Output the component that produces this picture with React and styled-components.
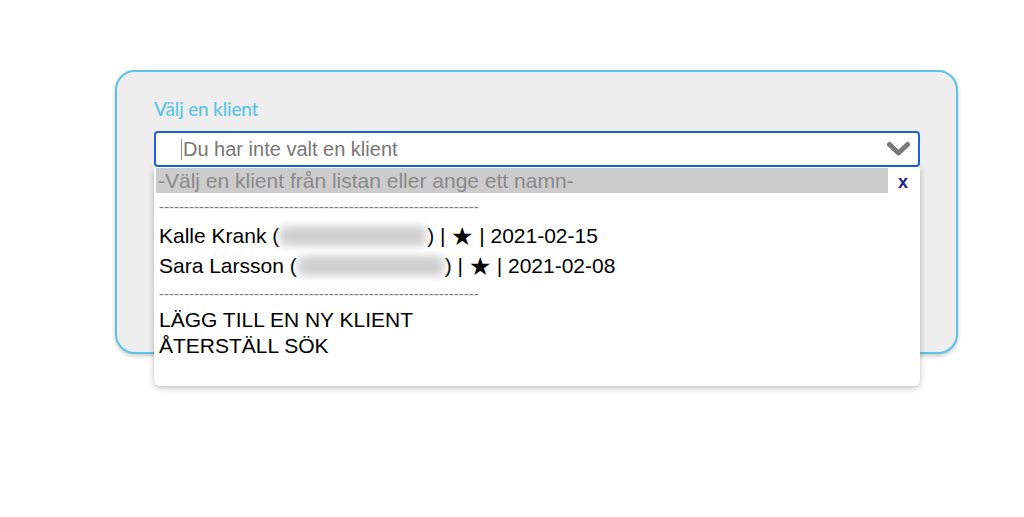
import React from "react";
import styled, { createGlobalStyle } from "styled-components";

const Global = createGlobalStyle`
  html, body { margin: 0; padding: 0; background: #ffffff; }
  body { font-family: "Liberation Sans", Arial, sans-serif; }
`;

const Page = styled.div`
  width: 1024px;
  height: 517px;
  padding: 70px 0 0 115px;
  box-sizing: border-box;
`;

const Card = styled.div`
  width: 843px;
  height: 284px;
  box-sizing: border-box;
  border: 2px solid #5cc3e7;
  border-radius: 20px;
  background: #eeeeee;
  box-shadow: 0 2px 4px rgba(0, 0, 0, 0.22);
  padding: 26px 37px 0 37px;
  display: flex;
  flex-direction: column;
  gap: 11px;
`;

const Label = styled.div`
  font-family: Lato, "Open Sans", sans-serif;
  font-size: 19px;
  font-weight: 500;
  line-height: 22px;
  color: #5cc4e8;
  letter-spacing: -0.2px;
`;

const SelectWrap = styled.div`
  position: relative;
  width: 766px;
`;

const Input = styled.div`
  height: 36px;
  box-sizing: border-box;
  border: 2px solid #1c63d4;
  border-radius: 4px;
  background: #ffffff;
  display: flex;
  align-items: center;
  padding: 0 7px 0 25px;
`;

const Placeholder = styled.span`
  flex: 1;
  font-size: 20px;
  color: #777777;
  display: flex;
  align-items: center;
  &::before {
    content: "";
    width: 1px;
    height: 21px;
    background: #8a8a8a;
    margin-right: 1px;
  }
`;

const Chevron = styled.svg`
  width: 25px;
  height: 16px;
  display: block;
`;

const Menu = styled.div`
  position: absolute;
  top: 36px;
  left: 0;
  width: 766px;
  height: 219px;
  box-sizing: border-box;
  background: #ffffff;
  border-radius: 0 0 6px 6px;
  box-shadow: 0 2px 6px rgba(0, 0, 0, 0.25);
  padding: 1px 0 0 2px;
  display: flex;
  align-items: flex-start;
`;

const List = styled.div`
  width: 732px;
  display: flex;
  flex-direction: column;
`;

const Item = styled.div`
  height: ${(p) => p.h}px;
  line-height: ${(p) => p.h}px;
  font-size: ${(p) => (p.dash ? 15 : 21)}px;
  color: ${(p) => (p.muted ? "#8a8a8a" : p.dash ? "#7d7d7d" : "#000000")};
  background: ${(p) => (p.active ? "#cccccc" : "transparent")};
  padding-left: ${(p) => (p.active ? 2 : 3)}px;
  white-space: nowrap;
  overflow: hidden;
`;

const Star = styled.span`
  font-size: 25px;
  vertical-align: top;
`;

const Blur = styled.span`
  display: inline-block;
  vertical-align: middle;
  width: ${(p) => p.w}px;
  height: 20px;
  margin: -3px 1px 0;
  background: #cfcfcf;
  border-radius: 6px;
  filter: blur(4px);
`;

const Close = styled.div`
  flex: 1;
  height: 25px;
  display: flex;
  align-items: center;
  justify-content: center;
  font-family: "Liberation Sans", Arial, sans-serif;
  font-weight: bold;
  font-size: 18px;
  color: #24238c;
  padding-right: 2px;
  padding-top: 2px;
`;

const dashes = "-".repeat(64);

export default function App() {
  return (
    <>
      <Global />
      <Page>
        <Card>
          <Label>Välj en klient</Label>
          <SelectWrap>
            <Input>
              <Placeholder>Du har inte valt en klient</Placeholder>
              <Chevron viewBox="0 0 25 16">
                <polyline
                  points="3.5,3.5 12.5,12 21.5,3.5"
                  fill="none"
                  stroke="#7a7a7a"
                  strokeWidth="5"
                  strokeLinecap="round"
                  strokeLinejoin="round"
                />
              </Chevron>
            </Input>
            <Menu>
              <List>
                <Item h={25} active muted>
                  -Välj en klient från listan eller ange ett namn-
                </Item>
                <Item h={28} dash>
                  {dashes}
                </Item>
                <Item h={30}>
                  Kalle Krank (<Blur w={146} />) | <Star>★</Star> | 2021-02-15
                </Item>
                <Item h={30}>
                  Sara Larsson (<Blur w={146} />) | <Star>★</Star> | 2021-02-08
                </Item>
                <Item h={26} dash>
                  {dashes}
                </Item>
                <Item h={25}>LÄGG TILL EN NY KLIENT</Item>
                <Item h={27}>ÅTERSTÄLL SÖK</Item>
              </List>
              <Close>x</Close>
            </Menu>
          </SelectWrap>
        </Card>
      </Page>
    </>
  );
}
